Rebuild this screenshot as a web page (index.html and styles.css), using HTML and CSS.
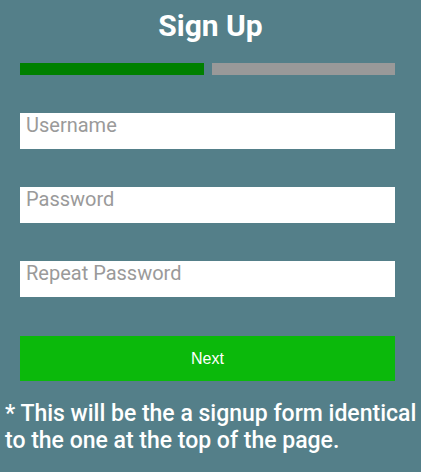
FILE: index.html
```html
<!DOCTYPE html>
<html>
<head>
<meta charset="utf-8">
<link rel="stylesheet" href="styles.css">
</head>
<body>
<div class="page">
  <h1 class="title">Sign Up</h1>
  <div class="progress">
    <div class="step done"></div>
    <div class="step"></div>
  </div>
  <form class="form">
    <input class="field" type="text" placeholder="Username">
    <input class="field" type="password" placeholder="Password">
    <input class="field" type="password" placeholder="Repeat Password">
    <button class="next" type="button">Next</button>
  </form>
  <p class="note">* This will be the a signup form identical to the one at the top of the page.</p>
</div>
</body>
</html>
```

FILE: styles.css
```css
html, body {
  margin: 0;
  padding: 0;
  background: #547f89;
}
.page {
  width: 421px;
  height: 472px;
  font-family: Roboto, "Liberation Sans", sans-serif;
  color: #fff;
}
.title {
  margin: 0;
  padding-top: 8px;
  height: 63px;
  box-sizing: border-box;
  text-align: center;
  font-size: 30px;
  font-weight: 700;
  line-height: 35px;
}
.progress {
  display: flex;
  gap: 8px;
  padding: 0 26px 0 20px;
  height: 12px;
}
.step {
  flex: 1;
  background: #999;
}
.step.done {
  background: #008000;
}
.form {
  display: flex;
  flex-direction: column;
  gap: 38px;
  padding: 38px 26px 0 20px;
  margin: 0;
}
.field {
  display: block;
  width: 375px;
  height: 36px;
  box-sizing: border-box;
  border: none;
  outline: none;
  background: #fff;
  padding: 0 6px 12px;
  font-family: Roboto, sans-serif;
  font-size: 20px;
  color: #333;
}
.field::placeholder {
  color: #9a9a9a;
}
.next {
  display: block;
  width: 375px;
  height: 45px;
  margin-top: 1px;
  border: none;
  background: #0bb90b;
  color: #fff;
  font-family: "Liberation Sans", Arial, sans-serif;
  font-size: 16px;
  padding: 0;
}
.note {
  margin: 0;
  padding: 19px 4px 0 5px;
  font-size: 23px;
  font-weight: 500;
  line-height: 27px;
}
```
